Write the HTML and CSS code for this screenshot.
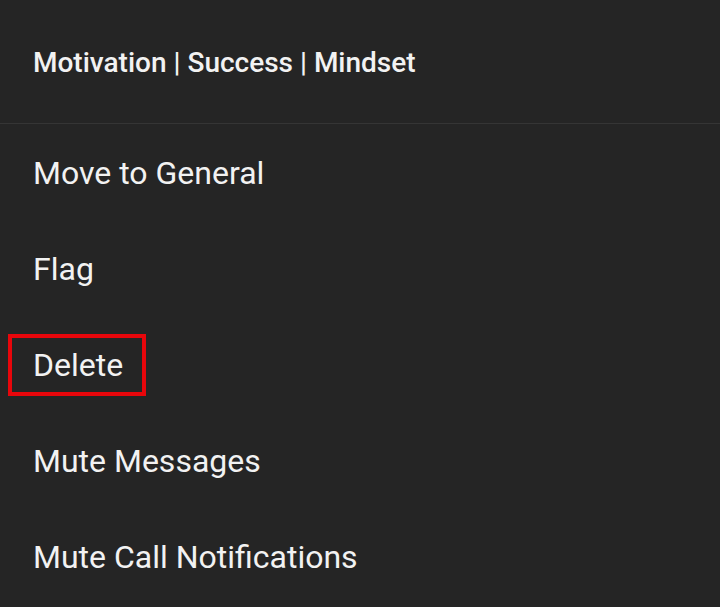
FILE: index.html
```html
<!DOCTYPE html>
<html lang="en">
<head>
  <meta charset="UTF-8">
  <title>Chat options</title>
  <link rel="stylesheet" href="styles.css">
</head>
<body>
<header class="sheet-title">Motivation | Success | Mindset</header>
<ul class="menu">
  <li>Move to General</li>
  <li>Flag</li>
  <li><span class="marked">Delete</span></li>
  <li>Mute Messages</li>
  <li>Mute Call Notifications</li>
</ul>
</body>
</html>
```

FILE: styles.css
```css
body { margin: 0; background: #252525; color: #f2f2f2; font-family: Roboto, "Liberation Sans", sans-serif; height: 607px; overflow: hidden; }
.sheet-title { display: flex; align-items: center; padding: 2px 0 0 33px; font-size: 28px; font-weight: 500; border-bottom: 1px solid #353535; box-sizing: border-box; height: 124px; }
.menu { list-style: none; margin: 0; padding: 1px 0 0; }
.menu li { height: 96px; display: flex; align-items: center; padding-left: 33px; font-size: 32px; }
.marked { position: relative; }
.marked::after { content: ""; position: absolute; left: -25px; right: -23px; top: -12px; bottom: -12px; border: 4px solid #e8060b; }
```
